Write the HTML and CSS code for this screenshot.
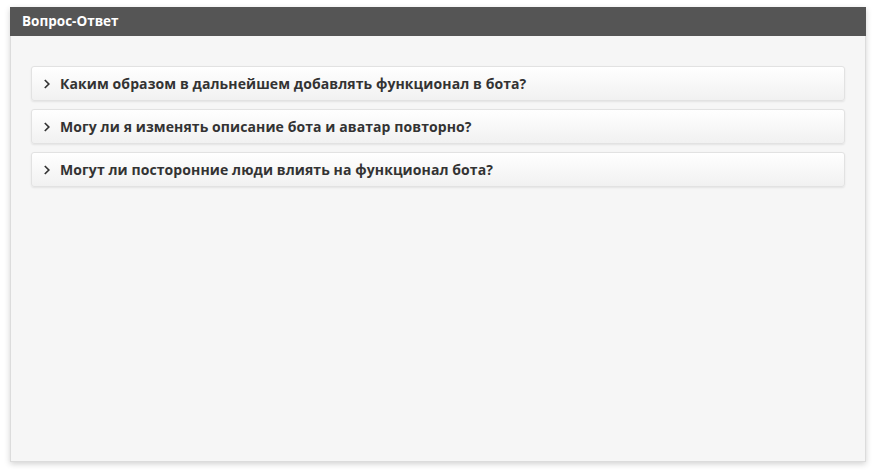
FILE: index.html
```html
<!DOCTYPE html>
<html lang="ru">
<head>
<meta charset="utf-8">
<title>Вопрос-Ответ</title>
<link rel="stylesheet" href="styles.css">
</head>
<body>
<div class="panel">
  <div class="panel-header">Вопрос-Ответ</div>
  <div class="panel-body">
    <div class="faq-item">
      <svg class="chev" width="8" height="12" viewBox="0 0 8 12"><path d="M1.8 2 L5.8 6 L1.8 10" fill="none" stroke="#333" stroke-width="1.7"/></svg>
      <span>Каким образом в дальнейшем добавлять функционал в бота?</span>
    </div>
    <div class="faq-item">
      <svg class="chev" width="8" height="12" viewBox="0 0 8 12"><path d="M1.8 2 L5.8 6 L1.8 10" fill="none" stroke="#333" stroke-width="1.7"/></svg>
      <span>Могу ли я изменять описание бота и аватар повторно?</span>
    </div>
    <div class="faq-item">
      <svg class="chev" width="8" height="12" viewBox="0 0 8 12"><path d="M1.8 2 L5.8 6 L1.8 10" fill="none" stroke="#333" stroke-width="1.7"/></svg>
      <span>Могут ли посторонние люди влиять на функционал бота?</span>
    </div>
  </div>
</div>
</body>
</html>
```
FILE: styles.css
```css
html, body {
  margin: 0;
  padding: 0;
  background: #ffffff;
}
body {
  padding: 7px 9px 11px 10px;
  font-family: "Open Sans", "Noto Sans", sans-serif;
}
.panel {
  height: 455px;
  box-sizing: border-box;
  background: #f6f6f6;
  border: 1px solid #dcdcdc;
  border-top: none;
  box-shadow: 0 2px 6px rgba(0,0,0,0.18);
  display: flex;
  flex-direction: column;
}
.panel-header {
  background: #555555;
  color: #ffffff;
  font-weight: 700;
  font-size: 13.5px;
  height: 29px;
  line-height: 29px;
  padding-left: 12px;
  margin: 0 -1px;
}
.panel-body {
  padding: 30px 20px 0 20px;
  display: flex;
  flex-direction: column;
  gap: 8px;
}
.faq-item {
  height: 35px;
  box-sizing: border-box;
  border: 1px solid #e2e2e2;
  border-radius: 3px;
  background: linear-gradient(#ffffff, #f1f1f1);
  box-shadow: 0 1px 2px rgba(0,0,0,0.08);
  display: flex;
  align-items: center;
  padding-left: 11px;
  gap: 9px;
  color: #333333;
  font-weight: 700;
  font-size: 14px;
  letter-spacing: 0.09px;
}
.chev {
  flex: none;
}
```
